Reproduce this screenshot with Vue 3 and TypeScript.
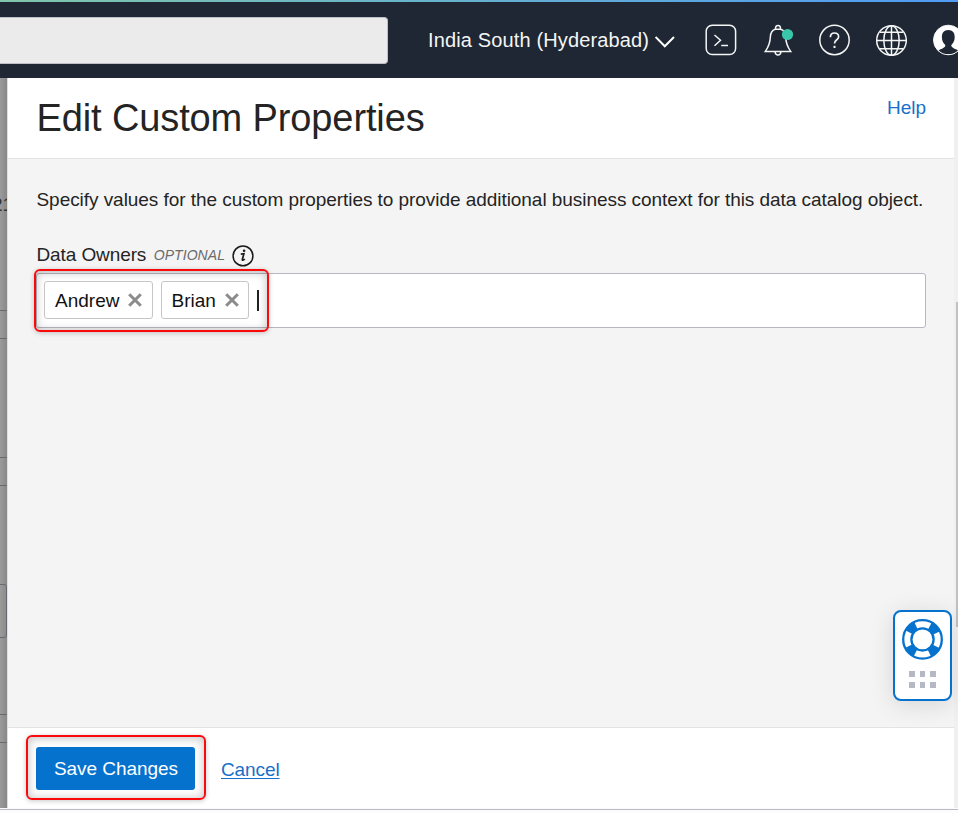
<script setup lang="ts">
import { ref } from 'vue'

const owners = ref<string[]>(['Andrew', 'Brian'])

function removeOwner(name: string) {
  owners.value = owners.value.filter((o) => o !== name)
}
</script>

<template>
  <div class="screen">
    <header class="topbar">
      <div class="search"></div>
      <button class="region">
        <span>India South (Hyderabad)</span>
        <svg width="20" height="12" viewBox="0 0 20 12" fill="none" stroke="#fff" stroke-width="2">
          <path d="M.6 1 9.8 10.3 19 1" />
        </svg>
      </button>
      <nav class="tools">
        <svg class="tool shell" width="32" height="32" viewBox="0 0 32 32" fill="none" stroke="#f4f5f5" stroke-width="1.5">
          <rect x="1.2" y="1.2" width="29.4" height="29.4" rx="6" />
          <path d="M9.5 11 15.5 16.2 9.5 21.7M16.2 21.4H23" />
        </svg>
        <svg class="tool bell" width="30" height="32" viewBox="0 0 30 32" fill="none" stroke="#f4f5f5" stroke-width="1.5">
          <path d="M11.4 5.2C11.4 2.2 12.2 1.5 14 1.5S16.6 2.2 16.6 5.2M11.4 5.2C7.6 6.2 6.6 9 6.4 12.5 6.2 19 5.2 22 1.2 27.6H26.8C22.8 22 21.8 19 21.6 12.5 21.4 9 20.4 6.2 16.6 5.2M11.3 5.2H16.7M11 27.8C11.4 30.2 12.4 31 14 31S16.6 30.2 17 27.8" />
          <circle cx="23.5" cy="10.5" r="5.6" fill="#3ac7a9" stroke="none" />
        </svg>
        <svg class="tool help-icon" width="32" height="32" viewBox="-0.5 0 32 32" fill="none" stroke="#f4f5f5" stroke-width="1.5">
          <circle cx="16" cy="16" r="14.7" />
          <path d="M11.9 13.2C11.9 10.5 13.5 9 16 9S20.1 10.5 20.1 12.7C20.1 15.9 16 15.6 16 19.6" stroke-width="1.7" />
          <path d="M16 21.8V24" stroke-width="2" />
        </svg>
        <svg class="tool globe" width="32" height="32" viewBox="-0.5 -0.5 32 32" fill="none" stroke="#f4f5f5" stroke-width="1.5">
          <circle cx="16" cy="16" r="14.8" />
          <ellipse cx="16" cy="16" rx="7.7" ry="14.8" />
          <path d="M16 1V31M1.2 16H30.8M4.5 7.8H27.5M4.5 24.2H27.5" />
        </svg>
        <svg class="tool user" width="32" height="32" viewBox="-0.3 0 32 32">
          <circle cx="16" cy="16" r="14.8" fill="#fff" stroke="#f4f5f5" stroke-width="1" />
          <path d="M16 6C11.5 6 9.6 9.1 9.6 13.2 9.6 16.6 11 19.3 13 21 13 23.6 10.5 24.3 6.3 26.2 11 31.4 21 31.4 25.7 26.2 21.5 24.3 19 23.6 19 21 21 19.3 22.4 16.6 22.4 13.2 22.4 9.1 20.5 6 16 6Z" fill="#1e2733" />
        </svg>
      </nav>
    </header>

    <div class="stage">
      <aside class="backdrop">
        <span class="peek-text">21</span>
        <i class="rule r1"></i><i class="rule r2"></i><i class="rule r3"></i><i class="rule r4"></i>
        <i class="peek-box"></i>
        <i class="rule r5"></i><i class="rule r6"></i>
      </aside>

      <main class="panel">
        <div class="panel-head">
          <h1>Edit Custom Properties</h1>
          <a class="help">Help</a>
        </div>
        <section class="panel-body">
          <p class="intro">Specify values for the custom properties to provide additional business context for this data catalog object.</p>
          <div class="label-row">
            <label>Data Owners</label>
            <em>OPTIONAL</em>
            <svg width="22" height="22" viewBox="0 0.5 22 22" fill="none" stroke="#1a1a1a">
              <circle cx="11" cy="11.4" r="9.9" stroke-width="1.5" />
              <path d="M8.8 9.7 11.9 9.2 10.4 14.7C10.1 16.2 11.2 16.1 12.8 14.5" stroke-width="1.7" />
              <circle cx="12.1" cy="6.3" r="1.3" fill="#1a1a1a" stroke="none" />
            </svg>
          </div>
          <div class="field">
            <span v-for="owner in owners" :key="owner" class="chip">
              <span>{{ owner }}</span>
              <svg width="14" height="14" viewBox="0 0 14 14" stroke="#8b8b8b" stroke-width="3" @click="removeOwner(owner)">
                <path d="M1.2 1.2 12.8 12.8M12.8 1.2 1.2 12.8" />
              </svg>
            </span>
            <span class="caret"></span>
            <div class="mark mark-field"></div>
          </div>
        </section>
        <footer class="panel-foot">
          <button class="save">Save Changes</button>
          <a class="cancel">Cancel</a>
          <div class="mark mark-save"></div>
        </footer>
      </main>
      <div class="track"><div class="thumb"></div></div>
    </div>
    <div class="bottom-edge"></div>

    <div class="support">
      <svg width="42" height="42" viewBox="0.5 -0.4 42 42" fill="none" stroke="#0572ce">
        <circle cx="21" cy="21" r="15" stroke-width="9" stroke-dasharray="9.4 14.162" stroke-dashoffset="-7.081" />
        <circle cx="21" cy="21" r="19.3" stroke-width="2.3" />
        <circle cx="21" cy="21" r="11.1" stroke-width="2.3" />
      </svg>
      <div class="dots"><i v-for="n in 6" :key="n"></i></div>
    </div>
  </div>
</template>

<style>
body {
  overflow: hidden;
}
</style>

<style scoped>
* {
  box-sizing: border-box;
}
.screen {
  position: relative;
  width: 958px;
  height: 813px;
  display: flex;
  flex-direction: column;
  overflow: hidden;
  background: #fcfcfc;
  color: #242424;
  font: 19px/24px "Liberation Sans", Arial, sans-serif;
}
button {
  border: 0;
  background: none;
  padding: 0;
  font: inherit;
}
svg {
  display: block;
  flex: none;
}
.topbar {
  height: 78px;
  flex: none;
  display: flex;
  align-items: center;
  padding-top: 2px;
  background: linear-gradient(90deg, #80c6aa, #65b0cf 50%, #509bf5) 0 0 / 100% 2px no-repeat, #1e2733;
}
.search {
  width: 388px;
  height: 47px;
  margin-top: 1px;
  flex: none;
  background: #ebebeb;
  border: 1px solid #bdc0c6;
  border-left: 0;
  border-radius: 0 4px 4px 0;
}
.region {
  display: flex;
  align-items: center;
  justify-content: space-between;
  width: 247px;
  margin-left: 40px;
  flex: none;
  color: #f4f5f5;
  font-size: 20px;
  letter-spacing: 0.14px;
  white-space: nowrap;
}
.region svg {
  margin-top: 3px;
}
.tools {
  display: flex;
  flex: none;
  margin-left: 30px;
}
.bell {
  margin-left: 27px;
}
.help-icon {
  margin-left: 24px;
}
.globe {
  margin-left: 25px;
}
.user {
  margin-left: 25px;
}
.stage {
  height: 730px;
  flex: none;
  display: flex;
}
.backdrop {
  position: relative;
  width: 8px;
  flex: none;
  overflow: hidden;
  background: linear-gradient(90deg, #9b9b9b, #888 7px, #dedede 7px);
}
.peek-text {
  position: absolute;
  left: -8px;
  top: 115px;
  width: 15px;
  overflow: hidden;
  color: #333;
}
.rule {
  position: absolute;
  left: 0;
  width: 7px;
  height: 1px;
  background: #666970;
}
.r1 { top: 232px; }
.r2 { top: 260px; }
.r3 { top: 379px; }
.r4 { top: 407px; }
.r5 { top: 636px; }
.r6 { top: 664px; }
.peek-box {
  position: absolute;
  left: -6px;
  top: 506px;
  width: 13px;
  height: 54px;
  border: 1px solid #666970;
  border-radius: 3px;
}
.panel {
  width: 946px;
  flex: none;
  display: flex;
  flex-direction: column;
  background: #fff;
}
.panel-head {
  height: 81px;
  flex: none;
  display: flex;
  justify-content: space-between;
  padding: 17px 28px 0 28.5px;
  border-bottom: 1px solid #e3e3e3;
}
h1 {
  margin: 0;
  font-size: 38px;
  line-height: 46px;
  font-weight: 400;
  letter-spacing: -0.12px;
}
.help {
  margin-top: 1px;
  color: #176fc9;
}
.panel-body {
  flex: 1;
  padding: 29px 28px 0;
  background: #f4f4f4;
}
.intro {
  margin: 0 0 0 0.5px;
  white-space: nowrap;
  letter-spacing: -0.052px;
}
.label-row {
  display: flex;
  align-items: center;
  margin-top: 31px;
  height: 24px;
}
.label-row label {
  margin-left: 0.5px;
  letter-spacing: -0.1px;
}
.label-row em {
  margin-left: 7.5px;
  color: #6b6b6b;
  font-size: 14px;
  letter-spacing: 0.05px;
}
.label-row svg {
  margin-left: 6.6px;
  margin-top: 1px;
}
.field {
  position: relative;
  display: flex;
  align-items: flex-start;
  gap: 8px;
  width: 890px;
  height: 55px;
  margin-top: 6px;
  padding: 7px 0 0 7px;
  background: #fff;
  border: 1px solid #b5b8be;
  border-radius: 3px;
}
.chip {
  display: flex;
  align-items: center;
  justify-content: space-between;
  height: 38px;
  width: 109px;
  padding: 0 10px;
  color: #111;
  background: #fff;
  border: 1px solid #c6c6c6;
  border-radius: 3px;
  position: relative;
  z-index: 1;
}
.chip span {
  padding-top: 2px;
}
.chip + .chip {
  width: 88px;
  padding-right: 9px;
  padding-left: 9.5px;
}
.caret {
  width: 2px;
  height: 21px;
  margin-top: 9px;
  background: #222;
}
.mark {
  position: absolute;
  border: 2px solid #fb0a0c;
  border-radius: 6px;
  box-shadow: 0 1px 5px rgba(0, 0, 0, 0.22), inset 0 1px 9px 1px rgba(0, 0, 0, 0.22);
  pointer-events: none;
}
.mark-field {
  left: -3px;
  top: -5px;
  width: 235px;
  height: 63px;
}
.panel-foot {
  position: relative;
  height: 81px;
  flex: none;
  display: flex;
  align-items: center;
  padding-left: 28px;
  border-top: 1px solid #e3e3e3;
}
.save {
  width: 159px;
  height: 43px;
  padding: 1px 0 0 1px;
  background: #0572ce;
  color: #fff;
  letter-spacing: -0.05px;
  border-radius: 3px;
}
.cancel {
  margin: 4px 0 0 26px;
  color: #176fc9;
  letter-spacing: -0.1px;
  text-decoration: underline;
  text-underline-offset: 2px;
}
.mark-save {
  left: 18px;
  top: 7px;
  width: 180px;
  height: 65px;
}
.track {
  display: flex;
  width: 4px;
  height: 730px;
  background: #f0f0f0;
}
.thumb {
  width: 2px;
  height: 325px;
  margin: 224px 0 0 2px;
  background: #c1c1c1;
}
.bottom-edge {
  height: 2px;
  flex: none;
  background: #fcfcfc;
  border-bottom: 1px solid #b8bac6;
}
.support {
  position: absolute;
  left: 893px;
  top: 610px;
  width: 59px;
  height: 91px;
  display: flex;
  flex-direction: column;
  align-items: center;
  padding-top: 6px;
  background: #fff;
  border: 2px solid #0572ce;
  border-radius: 8px;
  box-shadow: 0 4px 24px rgba(0, 0, 0, 0.12);
}
.dots {
  display: grid;
  grid-template-columns: repeat(3, 5.7px);
  gap: 5px;
  margin-top: 11px;
}
.dots i {
  height: 6px;
  background: #b5b9c3;
}
</style>
